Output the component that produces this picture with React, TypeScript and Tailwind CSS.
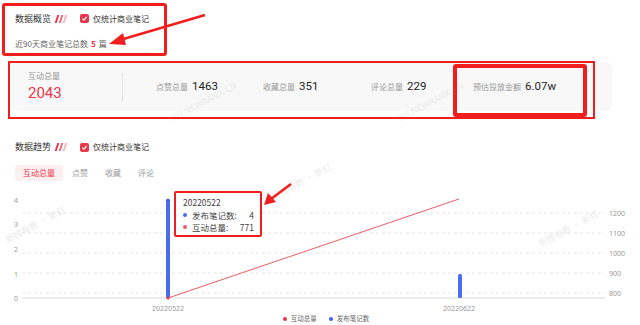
import React from 'react';

// Overview page: stats card + trend chart, with red annotation marks on top
const font = { fontFamily: '"Noto Sans CJK SC", "Noto Sans", sans-serif' };

const Slashes = () => (
  <span className="flex items-center gap-[2px] ml-[5px]">
    <span className="w-[2px] h-[8px] bg-[#e8364a] skew-x-[-18deg]" />
    <span className="w-[2px] h-[8px] bg-[#f06a7a] skew-x-[-18deg]" />
    <span className="w-[2px] h-[8px] bg-[#f7b6be] skew-x-[-18deg]" />
  </span>
);

const Check = () => (
  <span className="flex items-center gap-[4px] ml-[14px]">
    <span className="w-[9px] h-[9px] rounded-[2px] bg-[#e8364a] flex items-center justify-center">
      <svg width="7" height="7" viewBox="0 0 10 10">
        <path d="M2 5.2 L4.2 7.3 L8 2.8" stroke="#fff" strokeWidth="1.8" fill="none" />
      </svg>
    </span>
    <span className="text-[8px] text-[#333]">仅统计商业笔记</span>
  </span>
);

const Stat = ({ label, value }: { label: string; value: string }) => (
  <div className="flex items-baseline gap-[4px]">
    <span className="text-[8px] text-[#999]">{label}</span>
    <span className="text-[11.5px] text-[#222]" style={{ fontFamily: 'Roboto, sans-serif' }}>
      {value}
    </span>
  </div>
);

const Watermark = ({ text, className }: { text: string; className: string }) => (
  <span className={`absolute text-[9px] text-[#ececec] rotate-[-28deg] whitespace-nowrap pointer-events-none ${className}`}>
    {text}
  </span>
);

const Chart = () => {
  const grid = [24, 44, 64, 84, 104];
  const leftLabels = [
    { t: '4', y: 11 },
    { t: '3', y: 35 },
    { t: '2', y: 60 },
    { t: '1', y: 85 },
    { t: '0', y: 109 },
  ];
  const rightLabels = ['1200', '1100', '1000', '900', '800'];
  return (
    <svg width="640" height="125" className="block" style={{ fontFamily: '"Noto Sans", sans-serif' }}>
      {grid.map((y) => (
        <line key={y} x1="22" x2="605" y1={y} y2={y} stroke="#e4e4e4" strokeDasharray="3 3" strokeWidth="1" />
      ))}
      <line x1="22" x2="605" y1="109" y2="109" stroke="#d9d9d9" strokeWidth="1" />
      {leftLabels.map((l) => (
        <text key={l.t} x="16" y={l.y + 3} fontSize="7" fill="#999" textAnchor="middle">
          {l.t}
        </text>
      ))}
      {rightLabels.map((t, i) => (
        <text key={t} x="609" y={grid[i] + 3} fontSize="7" fill="#999">
          {t}
        </text>
      ))}
      <rect x="166" y="10" width="4" height="99" rx="1.5" fill="#4a6cf0" />
      <circle cx="168" cy="11" r="1.3" fill="#2b4fd6" />
      <rect x="458" y="85" width="4" height="24" rx="1.5" fill="#4a6cf0" />
      <line x1="168" y1="109" x2="459" y2="10" stroke="#ee5a66" strokeWidth="1" />
      <circle cx="168" cy="109" r="1.6" fill="#e8364a" />
      <text x="168" y="122" fontSize="7" fill="#999" textAnchor="middle">20220522</text>
      <text x="459" y="122" fontSize="7" fill="#999" textAnchor="middle">20220622</text>
    </svg>
  );
};

const App = () => {
  return (
    <div className="relative w-[640px] h-[325px] overflow-hidden bg-white" style={font}>
      {/* overview header */}
      <div className="pl-[15px] pt-[10px] h-[27px] flex items-center">
        <span className="text-[9px] text-[#333]">数据概览</span>
        <Slashes />
        <Check />
      </div>
      <div className="pl-[15px] mt-[11px] h-[12px] flex items-center text-[8px] text-[#666]">
        近90天商业笔记总数
        <span className="text-[#ef2b45] font-bold mx-[3px]">5</span>篇
      </div>

      {/* stats card */}
      <div className="ml-[12px] mt-[12px] w-[600px] h-[49px] bg-[#f8f8f8] rounded-[6px] flex items-center">
        <div className="w-[110px] pl-[16px] flex flex-col">
          <span className="text-[8px] text-[#999] leading-[12px]">互动总量</span>
          <span
            className="text-[15px] text-[#e8364a] leading-[20px] mt-[1px]"
            style={{ fontFamily: 'Roboto, sans-serif' }}
          >
            2043
          </span>
        </div>
        <div className="w-px h-[28px] bg-[#e3e3e3]" />
        <div className="flex items-center pl-[33px]">
          <div className="w-[107px]">
            <Stat label="点赞总量" value="1463" />
          </div>
          <div className="w-[108px]">
            <Stat label="收藏总量" value="351" />
          </div>
          <div className="w-[102px]">
            <Stat label="评论总量" value="229" />
          </div>
          <Stat label="预估投放金额" value="6.07w" />
        </div>
      </div>

      {/* trend header */}
      <div className="pl-[15px] mt-[28px] h-[16px] flex items-center">
        <span className="text-[9px] text-[#333]">数据趋势</span>
        <Slashes />
        <Check />
      </div>
      <div className="pl-[15px] mt-[10px] h-[16px] flex items-center text-[8px]">
        <span className="h-[16px] w-[48px] flex items-center justify-center bg-[#fdeef0] text-[#e8364a] rounded-[2px]">
          互动总量
        </span>
        <span className="text-[#999] ml-[9px]">点赞</span>
        <span className="text-[#999] ml-[17px]">收藏</span>
        <span className="text-[#999] ml-[17px]">评论</span>
      </div>

      <div className="mt-[8px]">
        <Chart />
      </div>
      <div className="h-[10px] flex items-center justify-center gap-[12px] text-[6.5px] text-[#666] pl-[12px]">
        <span className="flex items-center gap-[4px]">
          <span className="w-[4px] h-[4px] rounded-full bg-[#e8364a]" />
          互动总量
        </span>
        <span className="flex items-center gap-[4px]">
          <span className="w-[4px] h-[4px] rounded-full bg-[#3f63ee]" />
          发布笔记数
        </span>
      </div>

      {/* tooltip */}
      <div className="absolute left-[177px] top-[193px] w-[83px] h-[42px] bg-white px-[6px] pt-[3px] text-[8.5px] text-[#444] leading-[12.5px]">
        <div>20220522</div>
        <div className="flex items-center">
          <span className="w-[4px] h-[4px] rounded-full bg-[#4a6cf0] mr-[5px]" />
          <span className="flex-1">发布笔记数:</span>
          <span>4</span>
        </div>
        <div className="flex items-center">
          <span className="w-[4px] h-[4px] rounded-full bg-[#ee5a66] mr-[5px]" />
          <span className="flex-1">互动总量:</span>
          <span>771</span>
        </div>
      </div>

      {/* watermarks */}
      <Watermark text="XH.NEWRANK.CN" className="left-[168px] top-[95px]" />
      <Watermark text="XH.NEWRANK.CN" className="left-[395px] top-[95px]" />
      <Watermark text="新榜有数 · 新红" className="left-[2px] top-[218px]" />
      <Watermark text="新榜有数 · 新红" className="left-[268px] top-[175px]" />
      <Watermark text="新榜有数 · 新红" className="left-[535px] top-[222px]" />

      {/* red annotation marks */}
      <div className="absolute left-[2px] top-[3px] w-[165px] h-[53px] border-[3px] border-[#f11e1e] rounded-[3px]" />
      <div className="absolute left-[8px] top-[61px] w-[587px] h-[58px] border-[2px] border-[#f11e1e]" />
      <div className="absolute left-[453px] top-[64px] w-[134px] h-[53px] border-[4px] border-[#f11e1e] rounded-[3px]" />
      <div className="absolute left-[174px] top-[191px] w-[88px] h-[46px] border-[2px] border-[#f11e1e] rounded-[2px]" />
      <svg className="absolute left-0 top-0 pointer-events-none" width="640" height="325">
        <line x1="205" y1="15" x2="120" y2="40" stroke="#f11e1e" strokeWidth="2.5" />
        <polygon points="109,44 123,33 126,45" fill="#f11e1e" />
        <line x1="291" y1="184" x2="271" y2="199" stroke="#f11e1e" strokeWidth="2.5" />
        <polygon points="264,205 268,193 276,202" fill="#f11e1e" />
      </svg>
    </div>
  );
};

export default App;
